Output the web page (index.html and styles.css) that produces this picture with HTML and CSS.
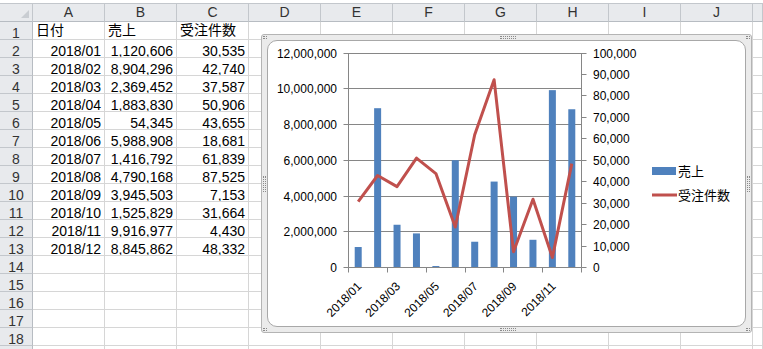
FILE: index.html
```html
<!DOCTYPE html>
<html lang="ja">
<head>
    <meta charset="UTF-8">
    <meta name="viewport" content="width=device-width, initial-scale=1.0">
    <title>売上と受注件数</title>
    <link rel="stylesheet" href="styles.css">
</head>
<body>
    <div class="sheet" id="sheet"></div>

    <div class="chart">
        <span class="grip grip-h grip-tl"></span>
        <span class="grip grip-h grip-tc"></span>
        <span class="grip grip-h grip-tr"></span>
        <span class="grip grip-v grip-ml"></span>
        <span class="grip grip-v grip-mr"></span>
        <span class="grip grip-h grip-bl"></span>
        <span class="grip grip-h grip-bc"></span>
        <span class="grip grip-h grip-br"></span>
        <div class="chart-inner">
            <svg id="chart" width="477" height="285" viewBox="268 41 477 285"></svg>
        </div>
    </div>

    <script>
        const rows = [
            ['2018/01', 1120606, 30535],
            ['2018/02', 8904296, 42740],
            ['2018/03', 2369452, 37587],
            ['2018/04', 1883830, 50906],
            ['2018/05', 54345, 43655],
            ['2018/06', 5988908, 18681],
            ['2018/07', 1416792, 61839],
            ['2018/08', 4790168, 87525],
            ['2018/09', 3945503, 7153],
            ['2018/10', 1525829, 31664],
            ['2018/11', 9916977, 4430],
            ['2018/12', 8845862, 48332]
        ];
        const cols = ['A', 'B', 'C', 'D', 'E', 'F', 'G', 'H', 'I', 'J', ''];
        const fmt = n => n.toLocaleString('en-US');

        // Sheet
        const sheet = document.getElementById('sheet');

        function cell(cls, text) {
            const d = document.createElement('div');
            d.className = cls;
            d.textContent = text;
            sheet.appendChild(d);
        }

        cell('corner', '');
        cols.forEach(c => cell('col-head', c));

        // 18 full rows, plus the top sliver of row 19
        for (let r = 1; r <= 19; r++) {
            cell('row-head', r < 19 ? r : '');
            let values = [];
            if (r === 1) {
                values = ['日付', '売上', '受注件数'];
            } else if (rows[r - 2]) {
                const row = rows[r - 2];
                values = [row[0], fmt(row[1]), fmt(row[2])];
            }
            cols.forEach((c, i) => {
                cell(r > 1 && i < 3 ? 'cell num' : 'cell', values[i] || '');
            });
        }

        // Chart
        const svg = document.getElementById('chart');
        const NS = 'http://www.w3.org/2000/svg';

        function add(tag, attrs, text) {
            const el = document.createElementNS(NS, tag);
            for (const k in attrs) el.setAttribute(k, attrs[k]);
            if (text !== undefined) el.textContent = text;
            svg.appendChild(el);
            return el;
        }

        const plot = { left: 348.5, right: 581.5, top: 53, bottom: 267.5 };
        const plotH = plot.bottom - plot.top;
        const step = (plot.right - plot.left) / rows.length;

        // primary axis: 0 - 12,000,000
        for (let k = 0; k <= 6; k++) {
            const y = Math.round(plot.bottom - k * plotH / 6 - 0.5) + 0.5;
            if (k > 0) add('line', { x1: plot.left, x2: plot.right, y1: y, y2: y, class: 'grid' });
            add('line', { x1: plot.left - 5, x2: plot.left, y1: y, y2: y, class: 'axis' });
            add('text', { x: 337, y: y + 4, class: 'tick-label', 'text-anchor': 'end' }, fmt(k * 2000000));
        }

        // secondary axis: 0 - 100,000
        for (let k = 0; k <= 10; k++) {
            const y = Math.round(plot.bottom - k * plotH / 10 - 0.5) + 0.5;
            add('line', { x1: plot.right, x2: plot.right + 5, y1: y, y2: y, class: 'axis' });
            add('text', { x: 593, y: y + 4, class: 'tick-label' }, fmt(k * 10000));
        }

        add('line', { x1: plot.left, x2: plot.left, y1: plot.top, y2: plot.bottom, class: 'axis' });
        add('line', { x1: plot.right, x2: plot.right, y1: plot.top, y2: plot.bottom, class: 'axis' });
        add('line', { x1: plot.left, x2: plot.right, y1: plot.bottom, y2: plot.bottom, class: 'axis' });

        // category ticks every 2 months
        for (let j = 0; j <= rows.length / 2; j++) {
            const x = Math.round(plot.left + j * 2 * step - 0.5) + 0.5;
            add('line', { x1: x, x2: x, y1: plot.bottom, y2: plot.bottom + 5, class: 'axis' });
        }

        const points = [];
        rows.forEach((row, i) => {
            const cx = plot.left + (i + 0.5) * step;
            const h = row[1] / 12000000 * (plotH - 0.5);
            add('rect', { x: cx - 3.5, y: plot.bottom - 0.5 - h, width: 7, height: h, class: 'bar' });
            points.push(cx.toFixed(1) + ',' + (plot.bottom - 0.5 - row[2] / 100000 * (plotH - 0.5)).toFixed(1));

            if (i % 2 === 0) {
                const lx = cx + 4;
                add('text', { x: lx, y: 287, class: 'tick-label', 'text-anchor': 'end',
                    transform: `rotate(-45 ${lx} 287)` }, row[0]);
            }
        });

        add('polyline', { points: points.join(' '), class: 'series-line' });

        // Legend
        add('rect', { x: 652, y: 167, width: 24, height: 8, class: 'bar' });
        add('text', { x: 678, y: 176, class: 'legend-label' }, '売上');
        add('line', { x1: 652, x2: 677, y1: 195, y2: 195, class: 'series-line' });
        add('text', { x: 678, y: 200, class: 'legend-label' }, '受注件数');
    </script>
</body>
</html>
```

FILE: styles.css
```css
* {
    margin: 0;
    padding: 0;
    box-sizing: border-box;
}

body {
    font-family: "Liberation Sans", "Noto Sans CJK JP", sans-serif;
    font-size: 14px;
    color: #000;
    background: #fff;
    width: 763px;
    height: 349px;
    overflow: hidden;
    position: relative;
}

.sheet {
    display: grid;
    grid-template-columns: 33px repeat(10, 72px) 1fr;
    grid-auto-rows: 18px;
    margin-top: 3px;
    border-top: 1px solid #c3c7cc;
}

.sheet div {
    border-right: 1px solid #d6d6d6;
    border-bottom: 1px solid #d6d6d6;
    line-height: 17px;
    white-space: nowrap;
    overflow: hidden;
}

.corner,
.col-head,
.row-head {
    background: #e8eaed;
    color: #333;
    text-align: center;
}

.sheet .corner,
.sheet .col-head {
    border-right-color: #c3c7cc;
    border-bottom-color: #b7bcc2;
}

.sheet .row-head {
    border-right-color: #b7bcc2;
    border-bottom-color: #c3c7cc;
}

.corner {
    position: relative;
}

.corner::after {
    content: "";
    position: absolute;
    right: 3px;
    bottom: 3px;
    border-left: 8px solid transparent;
    border-bottom: 8px solid #c9cdd2;
}

.cell {
    padding: 0 3px;
}

.num,
.row-head {
    padding-top: 3px;
}

.num {
    text-align: right;
}

/* Chart object */
.chart {
    position: absolute;
    left: 261px;
    top: 34px;
    width: 491px;
    height: 299px;
    border: 1px solid #b4b4b4;
    border-radius: 3px;
    background: #ebebeb;
    padding: 5px;
}

.chart-inner {
    width: 100%;
    height: 100%;
    background: #fff;
    border: 1px solid #a8a8a8;
    border-radius: 10px;
    overflow: hidden;
}

.chart-inner svg {
    display: block;
}

.grip {
    position: absolute;
}

.grip-h {
    height: 3px;
    border-top: 1px dotted #8a8a8a;
    border-bottom: 1px dotted #8a8a8a;
}

.grip-v {
    width: 3px;
    border-left: 1px dotted #8a8a8a;
    border-right: 1px dotted #8a8a8a;
}

.grip-tl { left: 1px; top: 1px; width: 4px; }
.grip-tc { left: 238px; top: 1px; width: 16px; }
.grip-tr { right: 1px; top: 1px; width: 4px; }
.grip-ml { left: 1px; top: 141px; height: 16px; }
.grip-mr { right: 1px; top: 141px; height: 16px; }
.grip-bl { left: 1px; bottom: 1px; width: 4px; }
.grip-bc { left: 238px; bottom: 1px; width: 16px; }
.grip-br { right: 1px; bottom: 1px; width: 4px; }

.grid,
.axis {
    stroke: #868686;
    stroke-width: 1;
}

.bar {
    fill: #4f81bd;
}

.series-line {
    fill: none;
    stroke: #c0504d;
    stroke-width: 3;
    stroke-linejoin: round;
}

.tick-label {
    font-family: "Liberation Sans", sans-serif;
    font-size: 12px;
    fill: #000;
}

.legend-label {
    font-family: "Noto Sans CJK JP", sans-serif;
    font-size: 13px;
    fill: #000;
}
```
